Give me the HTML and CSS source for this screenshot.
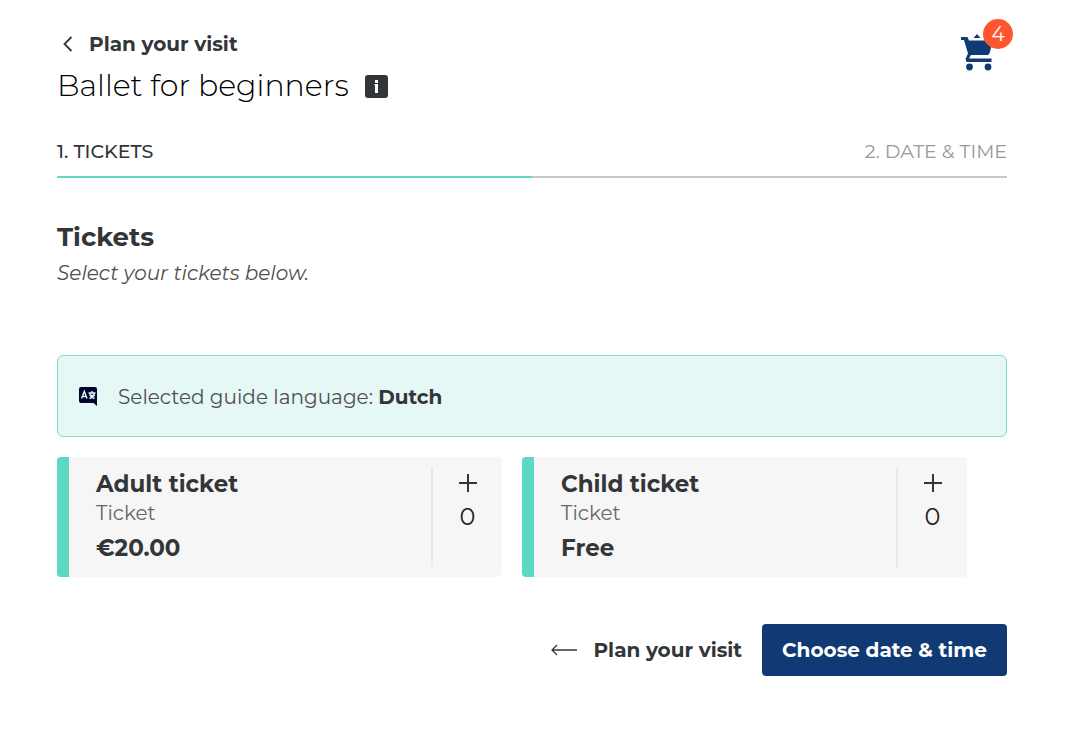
FILE: index.html
```html
<!DOCTYPE html>
<html lang="en">
<head>
    <meta charset="UTF-8">
    <meta name="viewport" content="width=device-width, initial-scale=1.0">
    <title>Ballet for beginners - Tickets</title>
    <link rel="stylesheet" href="styles.css">
</head>
<body>
<div class="container">
    <header class="page-header">
        <div>
            <a class="back-link" href="#">
                <svg width="20" height="20" viewBox="0 0 20 20" fill="none" stroke="currentColor" stroke-width="1.800"><path d="M14.500 3 7.500 10l7 7"/></svg>
                Plan your visit
            </a>
            <h1>
                <span class="title-text">Ballet for beginners</span>
                <button type="button" class="info-button" aria-label="More information">
                    <svg width="23" height="23" viewBox="0 0 23 23"><rect width="23" height="23" rx="3" fill="#323639"/><path d="M10 5h3v3h-3zM9.500 9H13v9h-3v-7.500h-.5z" fill="#fff"/></svg>
                </button>
            </h1>
        </div>
        <a class="cart" href="#" aria-label="Shopping cart">
            <svg width="34" height="40" viewBox="0 0 34 40" fill="#113a74">
                <path d="M16 2 19.500 6h-7z"/>
                <path d="M0 5h6.500l1.500 3.500h24L28.500 21.500 27 23H10l-2 3.500h22.500V30H5.500L4.500 27 7 21.500 3 8H0z"/>
                <circle cx="8.500" cy="35" r="3.400"/>
                <circle cx="27" cy="35" r="3.400"/>
            </svg>
            <span class="cart-badge">4</span>
        </a>
    </header>

    <ol class="steps">
        <li class="step active">1. TICKETS</li>
        <li class="step">2. DATE &amp; TIME</li>
    </ol>

    <main>
        <h2>Tickets</h2>
        <p class="intro">Select your tickets below.</p>

        <div class="language">
            <svg width="19" height="20" viewBox="0 0 19 20">
                <path d="M2 1h14a2 2 0 0 1 2 2v17l-3.500-3H2a2 2 0 0 1-2-2V3a2 2 0 0 1 2-2z" fill="#03032f"/>
                <path d="M2.500 12.500 5.300 5.500 8 12.500M3.500 10.500H7M9.500 7h7M13 5v2M10.500 9.500h5.500M11 7.500c0 2.500 1.500 4 4.500 5M15 7.500c0 2.500-1.500 4-4.500 5" fill="none" stroke="#e5f8f6" stroke-width="1.400"/>
            </svg>
            <p>Selected guide language: <strong>Dutch</strong></p>
        </div>

        <div class="tickets">
            <section class="ticket">
                <div class="ticket-info">
                    <h3>Adult ticket</h3>
                    <p class="ticket-type">Ticket</p>
                    <p class="ticket-price">€20.00</p>
                </div>
                <div class="counter">
                    <button type="button" aria-label="Add adult ticket">
                        <svg width="20" height="20" viewBox="0 0 20 20" stroke="#323639" stroke-width="2"><path d="M1 10h18M10 1v18"/></svg>
                    </button>
                    <output>0</output>
                </div>
            </section>
            <section class="ticket">
                <div class="ticket-info">
                    <h3>Child ticket</h3>
                    <p class="ticket-type">Ticket</p>
                    <p class="ticket-price">Free</p>
                </div>
                <div class="counter">
                    <button type="button" aria-label="Add child ticket">
                        <svg width="20" height="20" viewBox="0 0 20 20" stroke="#323639" stroke-width="2"><path d="M1 10h18M10 1v18"/></svg>
                    </button>
                    <output>0</output>
                </div>
            </section>
        </div>
    </main>

    <footer class="actions">
        <a class="previous" href="#">
            <svg width="26" height="12" viewBox="0 0 26 12" fill="none" stroke="currentColor" stroke-width="1.300"><path d="M6 1 1 6l5 5M1 6h25"/></svg>
            Plan your visit
        </a>
        <button type="button" class="next">Choose date &amp; time</button>
    </footer>
</div>

<script>
    document.querySelectorAll('.counter').forEach(function (counter) {
        const amount = counter.querySelector('output');
        counter.querySelector('button').addEventListener('click', function () {
            amount.textContent = Number(amount.textContent) + 1;
        });
    });
</script>
</body>
</html>
```
FILE: styles.css
```css
:root {
    --primary-color: #113a74;
    --accent-color: #5dd9c1;
    --text-color: #323639;
    --muted-color: #4f4f4f;
    --badge-color: #ff5630;
}

* {
    box-sizing: border-box;
}

body {
    font-family: Montserrat, Inter, sans-serif;
    font-size: 20px;
    line-height: 28px;
    margin: 0;
    background-color: #fff;
    color: var(--text-color);
}

h1, h2, h3, p {
    margin: 0;
}

a {
    color: inherit;
    text-decoration: none;
}

button {
    border: none;
    padding: 0;
    background: none;
    font-family: inherit;
    cursor: pointer;
}

svg {
    display: block;
    flex: none;
}

.container {
    padding: 28px 61px 54px 57px;
}

.page-header {
    display: flex;
    justify-content: space-between;
    align-items: flex-start;
}

.back-link {
    display: flex;
    align-items: center;
    gap: 12px;
    line-height: 32px;
    font-weight: 700;
}

h1 {
    display: flex;
    align-items: center;
    gap: 16px;
    margin-top: 6px;
    font-size: 30px;
    line-height: 40px;
    font-weight: 300;
    color: #000;
}

.cart {
    position: relative;
    margin: 4px 12px 0 0;
}

.cart-badge {
    position: absolute;
    top: -13px;
    right: -18px;
    width: 30px;
    height: 30px;
    border-radius: 50%;
    background-color: var(--badge-color);
    color: #fff;
    line-height: 30px;
    text-align: center;
}

.steps {
    display: flex;
    margin: 34px 0 0;
    padding: 0;
    list-style: none;
    font-size: 19px;
    line-height: 24px;
}

.step {
    flex: 1;
    padding-bottom: 12px;
    border-bottom: 2px solid #c8c8c8;
    color: #999;
    text-align: right;
}

.step.active {
    border-color: var(--accent-color);
    color: var(--text-color);
    font-weight: 500;
    text-align: left;
}

h2 {
    margin-top: 43px;
    font-size: 26px;
    line-height: 32px;
    font-weight: 700;
}

.intro {
    margin-top: 6px;
    font-style: italic;
    color: var(--muted-color);
}

.language {
    display: flex;
    align-items: center;
    gap: 20px;
    margin-top: 68px;
    padding: 25px 21px;
    border: 1px solid #7fdfcd;
    border-radius: 6px;
    background-color: #e5f8f6;
    color: var(--muted-color);
}

.language p {
    padding-top: 2px;
}

.language strong {
    color: var(--text-color);
    font-weight: 700;
}

.tickets {
    display: grid;
    grid-template-columns: 1fr 1fr;
    gap: 20px;
    margin-top: 20px;
    padding-right: 40px;
}

.ticket {
    display: flex;
    padding: 10px 0;
    border-left: 12px solid var(--accent-color);
    border-radius: 4px;
    background-color: #f6f6f6;
}

.ticket-info {
    flex: 1;
    padding: 0 0 2px 27px;
}

h3, .ticket-price {
    font-size: 23px;
    line-height: 34px;
    font-weight: 700;
}

.ticket-type {
    line-height: 24px;
    color: #666;
}

.ticket-price {
    margin-top: 6px;
}

.counter {
    display: flex;
    flex-direction: column;
    align-items: center;
    gap: 10px;
    width: 71px;
    padding-top: 6px;
    border-left: 2px solid #e8e8e8;
    font-size: 24px;
    color: #222;
}

.actions {
    display: flex;
    justify-content: flex-end;
    align-items: center;
    gap: 20px;
    margin-top: 47px;
}

.previous {
    display: flex;
    align-items: center;
    gap: 16px;
    font-weight: 700;
}

.next {
    padding: 12px 20px;
    border-radius: 4px;
    background-color: var(--primary-color);
    color: #fff;
    font-size: 20px;
    line-height: 28px;
    font-weight: 700;
}
```
